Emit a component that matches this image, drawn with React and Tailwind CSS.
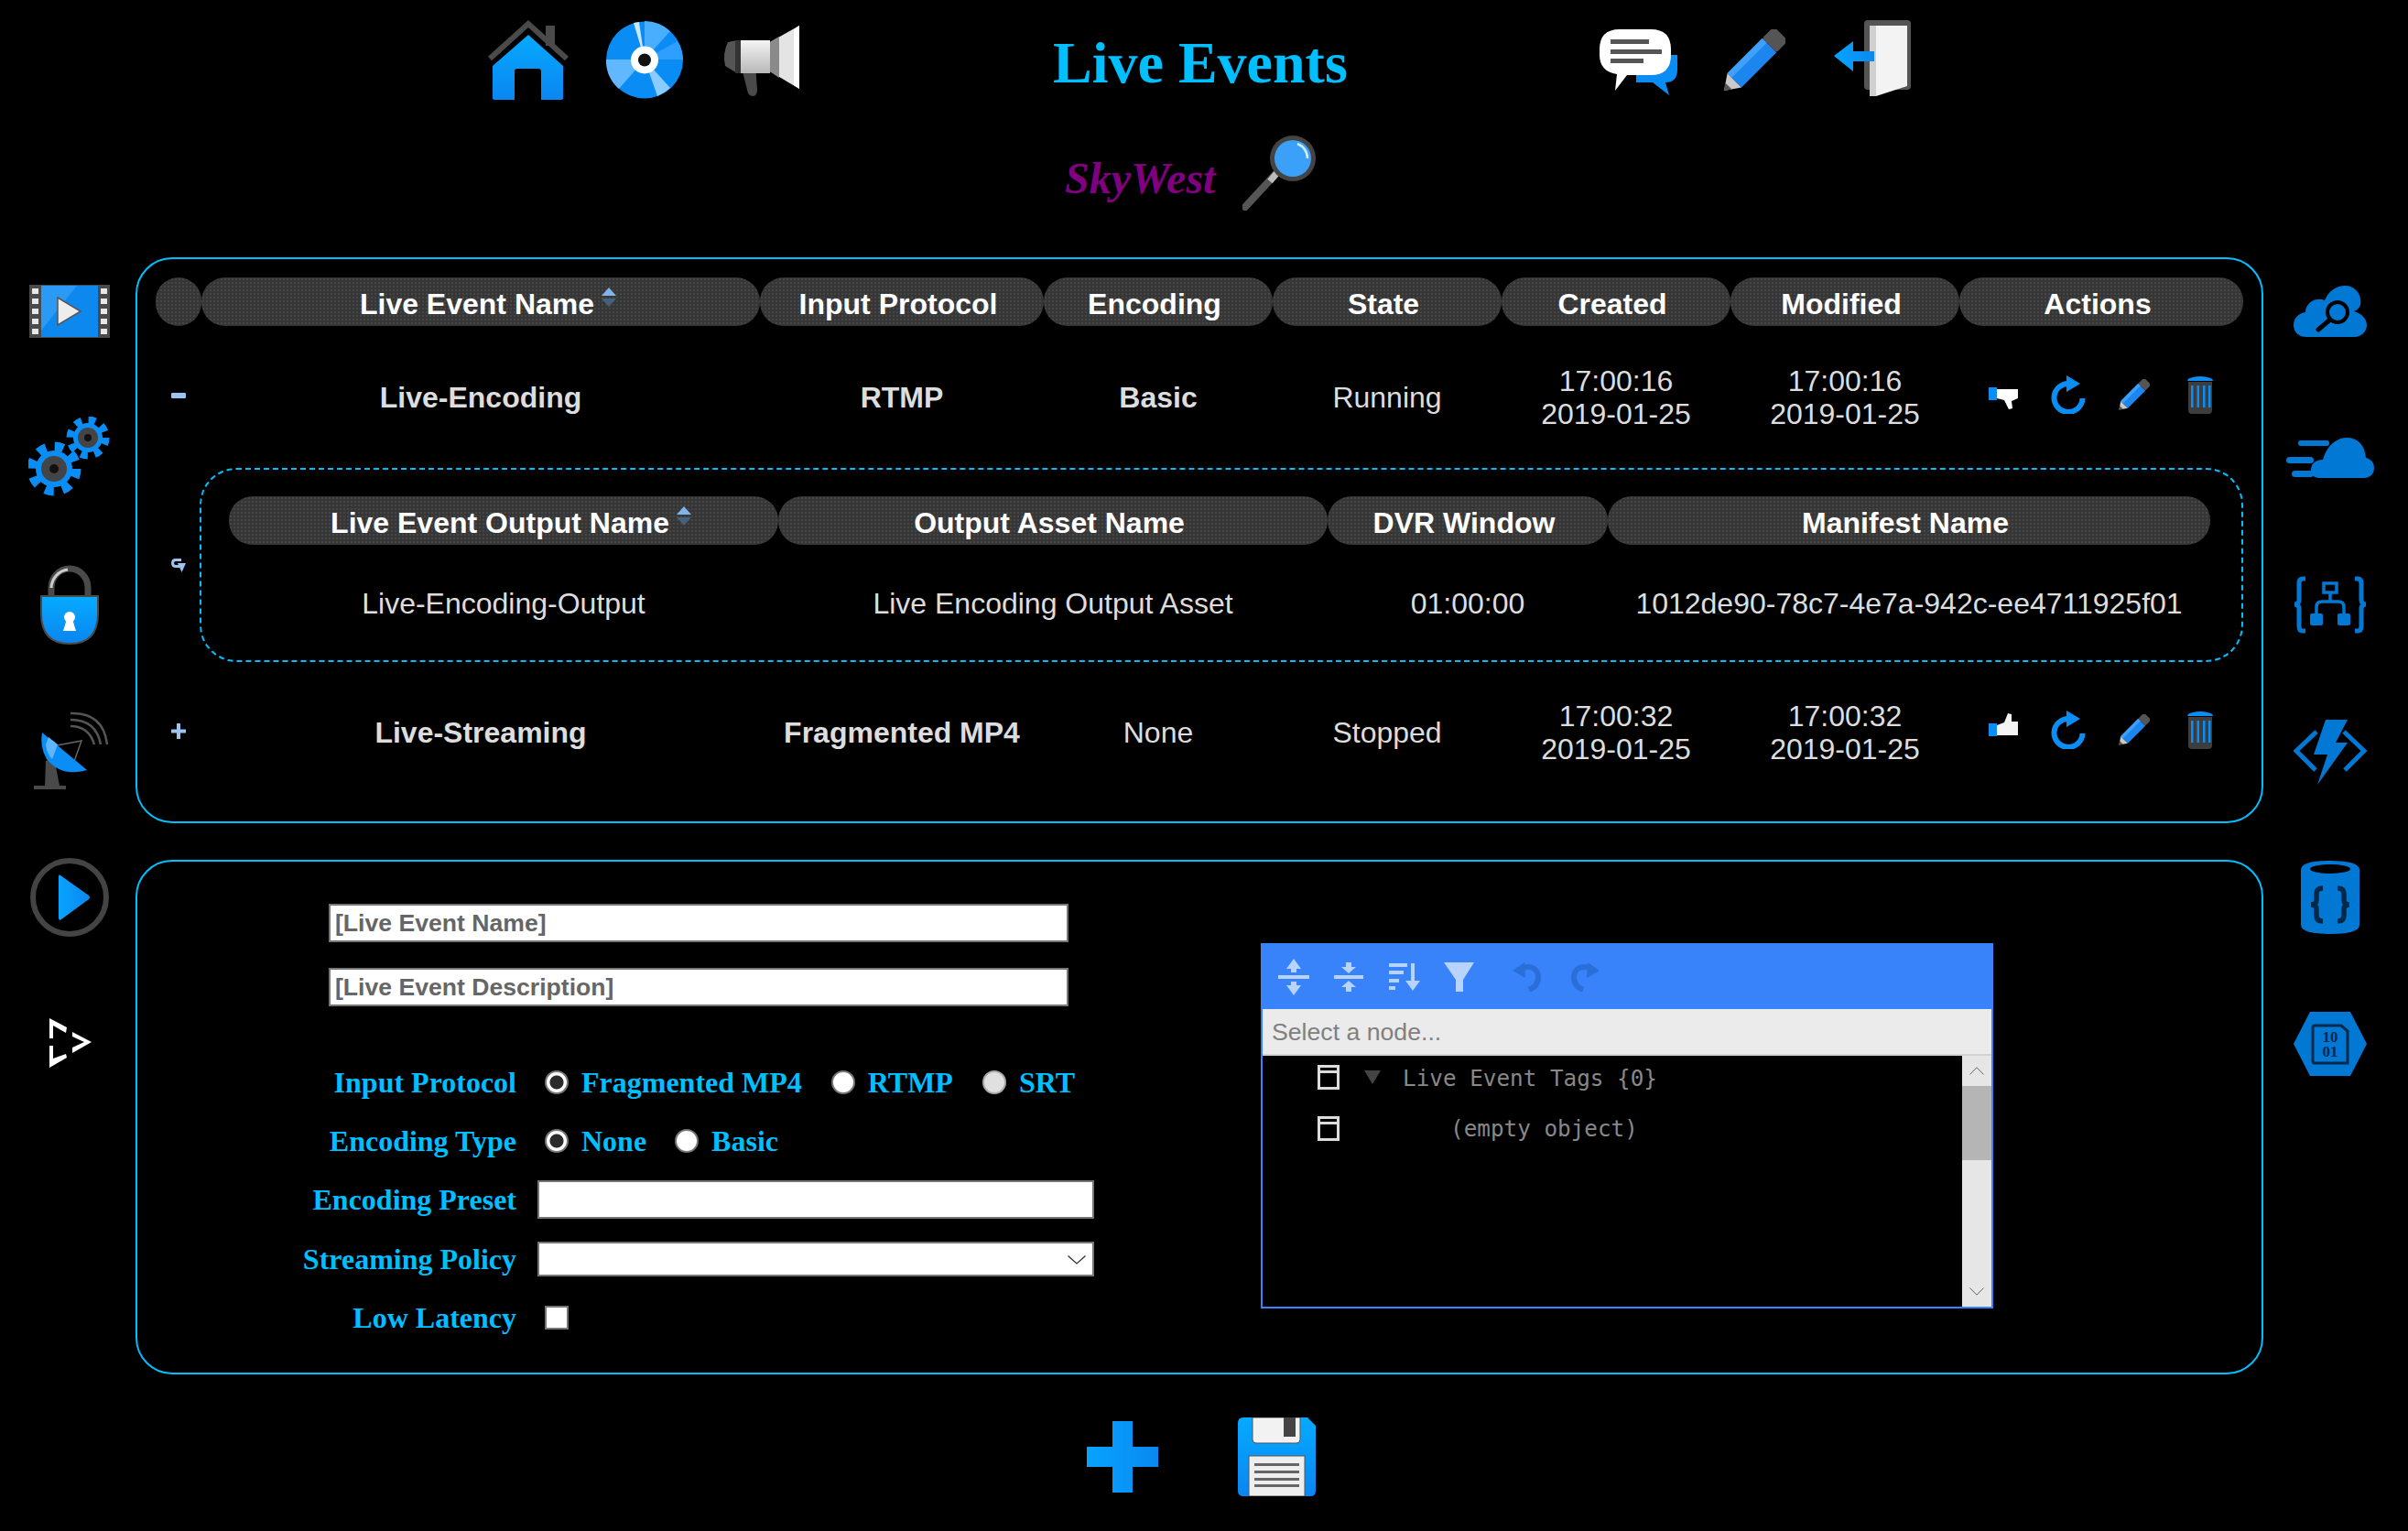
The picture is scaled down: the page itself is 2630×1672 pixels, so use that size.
import React from "react";

const BLUE = "#0a8ef5";
const AZURE = "#0078d4";

const cellHead =
  "relative flex items-center justify-center h-[53px] rounded-[26px] pt-[4px] pr-[8px] bg-[#3a3a3a] bg-[radial-gradient(circle,#464646_1px,#363636_1.5px)] bg-[length:4px_4px] text-white font-bold text-[32px]";

// Gradient used by most of the blue nav icons
function Defs() {
  return (
    <svg width="0" height="0" className="absolute">
      <defs>
        <linearGradient id="blueV" x1="0" y1="0" x2="0" y2="1">
          <stop offset="0" stopColor="#06aaff" />
          <stop offset="1" stopColor="#0a86f0" />
        </linearGradient>
        <linearGradient id="blueH" x1="0" y1="0" x2="1" y2="0">
          <stop offset="0" stopColor="#08a4ff" />
          <stop offset="1" stopColor="#0a88f0" />
        </linearGradient>
        <linearGradient id="metal" x1="0" y1="0" x2="0" y2="1">
          <stop offset="0" stopColor="#f4f4f4" />
          <stop offset="1" stopColor="#b8b8b8" />
        </linearGradient>
      </defs>
    </svg>
  );
}

function HomeIcon() {
  return (
    <svg width="90" height="88" viewBox="0 0 90 88" className="mt-[22px]">
      <rect x="64" y="6" width="10" height="22" fill="#4a4a4a" />
      <path d="M3 42 L45 4 L87 42" fill="none" stroke="#4a4a4a" strokeWidth="6" />
      <path d="M45 16 L83 50 V85 Q83 87 80 87 H59 V56 Q59 53 56 53 H33 Q30 53 30 56 V87 H9 Q6 87 6 85 V50 Z" fill="url(#blueV)" />
    </svg>
  );
}

function DiscIcon() {
  return (
    <svg width="84" height="85" viewBox="0 0 84 85" className="mt-[23px]">
      <circle cx="42" cy="42.5" r="42" fill="#0a8cf5" />
      <path d="M42 42 L42 0 A42 42 0 0 1 70 11 Z" fill="#4aaeff" />
      <path d="M42 42 L0 42 A42 42 0 0 0 14 74 Z" fill="#62b8ff" />
      <path d="M42 42 L56 82 A42 42 0 0 0 70 73 Z" fill="#8accff" />
      <path d="M42 42 L84 42 A42 42 0 0 0 78 22 Z" fill="#2f9fff" />
      <path d="M42 42 L30 2 L36 1 Z" fill="#cbe6ff" />
      <circle cx="42" cy="42.5" r="15" fill="#fff" />
      <circle cx="42" cy="42.5" r="7" fill="#111" />
    </svg>
  );
}

function MegaphoneIcon() {
  return (
    <svg width="84" height="77" viewBox="0 0 84 77" className="mt-[28px]">
      <path d="M20 42 H36 L38 70 Q38 77 33 77 Q28 77 27 70 Z" fill="#4a4a4a" />
      <path d="M6 18 Q0 30 3 44 L16 52 V16 Z" fill="#555" />
      <rect x="14" y="16" width="38" height="36" fill="url(#metal)" />
      <rect x="14" y="16" width="6" height="36" fill="#333" />
      <path d="M52 18 L84 0 V69 L52 50 Z" fill="#e4e4e4" />
      <path d="M78 4 L84 0 V69 L78 65 Z" fill="#fff" />
      <path d="M52 18 L62 12 V57 L52 50 Z" fill="#8a8a8a" />
    </svg>
  );
}

function ChatIcon() {
  return (
    <svg width="85" height="75" viewBox="0 0 85 75" className="mt-[30px]">
      <path d="M40 30 H85 V46 Q85 60 72 60 L76 74 L58 60 H40 Z" fill="#0a8cf5" />
      <path d="M22 2 H56 Q78 2 78 24 V30 Q78 52 56 52 H30 L17 69 L19 51 Q0 48 0 30 V24 Q0 2 22 2 Z" fill="#fff" />
      <rect x="12" y="13" width="42" height="5" fill="#555" />
      <rect x="12" y="24" width="56" height="5" fill="#555" />
      <rect x="12" y="34" width="36" height="5" fill="#555" />
    </svg>
  );
}

function PencilIcon({ size = 68, className = "" }) {
  return (
    <svg width={size} height={size} viewBox="0 0 68 68" className={className}>
      <g transform="translate(1 67) rotate(-45)">
        <path d="M0 0 L16 -11 V11 Z" fill="#c9c9c9" />
        <path d="M0 0 L7 -5 V5 Z" fill="#555" />
        <rect x="16" y="-11" width="54" height="22" fill="#1c86ee" />
        <rect x="16" y="-11" width="54" height="7" fill="#3ea0f7" />
        <rect x="70" y="-11" width="18" height="22" rx="3" fill="#555" />
      </g>
    </svg>
  );
}

function DoorIcon() {
  return (
    <svg width="84" height="83" viewBox="0 0 84 83" className="mt-[22px]">
      <rect x="33" y="0" width="51" height="76" rx="4" fill="#555" />
      <path d="M39 6 H80 V72 L46 83 H39 Z" fill="#f3f3f3" />
      <path d="M39 6 H46 V83 H39 Z" fill="#d0d0d0" />
      <path d="M0 39 L21 23 V34 H44 V45 H21 V56 Z" fill="url(#blueH)" />
    </svg>
  );
}

function SearchIcon() {
  return (
    <svg width="81" height="82" viewBox="0 0 81 82">
      <path d="M40 38 L3 78" stroke="#555" strokeWidth="8" strokeLinecap="round" />
      <path d="M40 38 L30 50" stroke="#bbb" strokeWidth="7" />
      <circle cx="55" cy="25" r="25" fill="#444" />
      <circle cx="55" cy="25" r="20" fill="#3ba0f8" />
      <path d="M60 9 A17 17 0 0 1 71 25" fill="none" stroke="#d4ecff" strokeWidth="2.5" />
    </svg>
  );
}

function FilmIcon() {
  return (
    <svg width="88" height="58" viewBox="0 0 88 58">
      <rect width="88" height="58" fill="#4a4a4a" />
      <rect x="13" y="1" width="62" height="56" fill="#0c88ee" />
      <path d="M13 1 H52 L13 50 Z" fill="#2b9af5" />
      {[4, 15, 26, 37, 48].map((y) => (
        <g key={y} fill="#e8e8e8">
          <rect x="3" y={y} width="7" height="6" />
          <rect x="78" y={y} width="7" height="6" />
        </g>
      ))}
      <path d="M31 14 L56 29 L31 44 Z" fill="#ededed" stroke="#555" strokeWidth="1.5" />
    </svg>
  );
}

function GearsIcon() {
  return (
    <svg width="89" height="90" viewBox="0 0 89 90">
      <circle cx="28" cy="57" r="24" fill="none" stroke={BLUE} strokeWidth="11" strokeDasharray="9.5 9.35" />
      <circle cx="28" cy="57" r="20" fill={BLUE} />
      <circle cx="28" cy="57" r="14" fill="#444" />
      <circle cx="28" cy="57" r="5" fill="#111" />
      <circle cx="65" cy="23" r="19" fill="none" stroke={BLUE} strokeWidth="9" strokeDasharray="7.5 7.43" />
      <circle cx="65" cy="23" r="16" fill={BLUE} />
      <circle cx="65" cy="23" r="11" fill="#444" />
      <circle cx="65" cy="23" r="4" fill="#111" />
    </svg>
  );
}

function LockIcon() {
  return (
    <svg width="64" height="88" viewBox="0 0 64 88">
      <path d="M12 40 V26 A20 21 0 0 1 52 26 V40" fill="none" stroke="#4a4a4a" strokeWidth="7" />
      <path d="M12 26 A20 21 0 0 1 30 6" fill="none" stroke="#ccc" strokeWidth="3" />
      <path d="M0 34 H64 V54 Q64 88 32 88 Q0 88 0 54 Z" fill="#4a4a4a" />
      <path d="M2 36 H62 V54 Q62 86 32 86 Q2 86 2 54 Z" fill="url(#blueV)" />
      <circle cx="32" cy="58" r="6" fill="#fff" />
      <path d="M29 60 L25 73 H39 L35 60 Z" fill="#fff" />
    </svg>
  );
}

function DishIcon() {
  return (
    <svg width="81" height="86" viewBox="0 0 81 86" className="ml-[4px]">
      <path d="M0 85 H35 V81 H28 L22 50 L13 54 L12 81 H0 Z" fill="#4a4a4a" />
      <path d="M20 38 L52 32 L42 60" fill="none" stroke="#666" strokeWidth="1.5" />
      <path d="M9 23 L58 64 Q30 72 14 52 Q6 38 9 23 Z" fill={BLUE} />
      <path d="M13 36 Q14 46 20 52 L26 36 L16 28 Z" fill="#5fb6ff" />
      <path d="M40 2 Q76 1 80 36 M40 9 Q68 9 73 36 M40 16 Q60 16 66 36" fill="none" stroke="#555" strokeWidth="2.5" />
    </svg>
  );
}

function PlayIcon() {
  return (
    <svg width="86" height="86" viewBox="0 0 86 86">
      <circle cx="43" cy="43" r="40" fill="none" stroke="#444" strokeWidth="6" />
      <path d="M33 19 Q31 17 31 21 V65 Q31 69 34 67 L64 45 Q66 43 64 41 Z" fill="url(#blueH)" />
    </svg>
  );
}

function BuildIcon() {
  return (
    <svg width="48" height="56" viewBox="0 0 48 56" fill="#fff">
      <path d="M2 0 L21 10 L20 16 L6 8 V22 H2 Z" />
      <path d="M2 54 L21 43 L20 39 L6 44 V30 H2 Z" />
      <path d="M27 15 L48 26 L27 38 V32 L40 26 L27 20 Z" />
    </svg>
  );
}

function CloudSearchIcon() {
  return (
    <svg width="80" height="56" viewBox="0 0 80 56">
      <path d="M14 56 C5 56 0 50 0 43 C0 35 6 30 13 29 C13 19 24 12 34 16 C38 6 47 0 56 0 C67 0 75 9 73 21 C71 26 68 27 66 28 C74 30 80 36 80 43 C80 50 74 56 66 56 Z" fill={AZURE} />
      <circle cx="48" cy="29" r="11" fill="none" stroke="#000" strokeWidth="4" />
      <path d="M40 37 L27 48" stroke="#000" strokeWidth="5" strokeLinecap="round" />
    </svg>
  );
}

function CloudFastIcon() {
  return (
    <svg width="96" height="44" viewBox="0 0 96 44" fill={AZURE}>
      <path d="M36 44 C30 44 27 40 27 35 C27 28 33 24 40 24 C44 9 55 0 66 0 C78 0 86 8 87 22 C92 23 96 27 96 33 C96 40 91 44 85 44 Z" />
      <rect x="13" y="3" width="34" height="6" rx="3" />
      <rect x="0" y="21" width="30" height="7" rx="3.5" />
      <rect x="6" y="36" width="24" height="7" rx="3.5" />
    </svg>
  );
}

function LogicIcon() {
  return (
    <svg width="80" height="63" viewBox="0 0 80 63">
      <g fill="none" stroke={AZURE} strokeWidth="5">
        <path d="M13 3 H10 Q6 3 6 8 V26 Q6 31 1 31 Q6 31 6 36 V55 Q6 60 10 60 H13" />
        <path d="M67 3 H70 Q74 3 74 8 V26 Q74 31 79 31 Q74 31 74 36 V55 Q74 60 70 60 H67" />
        <rect x="33" y="8" width="14" height="10" strokeWidth="3.5" />
        <path d="M40 18 V28 M25 41 V34 Q25 28 31 28 H49 Q55 28 55 34 V41" strokeWidth="3.5" />
      </g>
      <rect x="18" y="41" width="14" height="13" rx="2" fill={AZURE} />
      <rect x="48" y="41" width="14" height="13" rx="2" fill={AZURE} />
    </svg>
  );
}

function FunctionIcon() {
  return (
    <svg width="80" height="73" viewBox="0 0 80 73">
      <path d="M25 15 L3 36 L24 57 M55 15 L77 36 L56 57" fill="none" stroke={AZURE} strokeWidth="5" />
      <path d="M35 2 H59 L46 27 H59 L26 73 L37 40 H22 Z" fill={AZURE} />
    </svg>
  );
}

function CosmosIcon() {
  return (
    <svg width="64" height="80" viewBox="0 0 64 80">
      <path d="M0 10 Q0 0 32 0 Q64 0 64 10 V70 Q64 80 32 80 Q0 80 0 70 Z" fill={AZURE} />
      <ellipse cx="32" cy="9" rx="22" ry="5" fill="#000" />
      <path d="M24 30 Q17 30 17 36 V43 Q17 48 11 48 Q17 48 17 53 V60 Q17 66 24 66 M40 30 Q47 30 47 36 V43 Q47 48 53 48 Q47 48 47 53 V60 Q47 66 40 66" fill="none" stroke="#02284a" strokeWidth="5.5" />
    </svg>
  );
}

function HexIcon() {
  return (
    <svg width="80" height="70" viewBox="0 0 80 70">
      <path d="M0 35 L18 0 H62 L80 35 L62 70 H18 Z" fill={AZURE} />
      <path d="M23 15 H52 L59 21 V56 H23 Q21 56 21 54 V17 Q21 15 23 15 Z" fill="none" stroke="#02284a" strokeWidth="3" />
      <text x="40" y="33" textAnchor="middle" fontSize="17" fontFamily="Liberation Serif, serif" fontWeight="bold" fill="#02284a">10</text>
      <text x="40" y="49" textAnchor="middle" fontSize="17" fontFamily="Liberation Serif, serif" fontWeight="bold" fill="#02284a">01</text>
    </svg>
  );
}

function ThumbDown() {
  return (
    <svg width="32" height="25" viewBox="0 0 32 25" className="mt-[6px]">
      <rect x="0" y="1" width="9" height="14" fill={BLUE} />
      <path d="M9 3 H32 V13 L25 16 L26 24 L22 25 L17 15 L9 13 Z" fill="#fff" />
    </svg>
  );
}

function ThumbUp() {
  return (
    <svg width="32" height="26" viewBox="0 0 32 26" className="mb-[10px]">
      <rect x="0" y="11" width="9" height="14" fill={BLUE} />
      <path d="M9 13 L17 10 L21 0 L25 1 L25 9 H32 V24 H9 Z" fill="#f4f4f4" />
    </svg>
  );
}

function RefreshIcon() {
  return (
    <svg width="38" height="42" viewBox="0 0 38 42">
      <path d="M20 9 A15.5 15.5 0 1 0 34.5 25" fill="none" stroke={BLUE} strokeWidth="6" />
      <path d="M17 0 L32 9 L17 18 Z" fill={BLUE} />
    </svg>
  );
}

function TrashIcon() {
  return (
    <svg width="28" height="41" viewBox="0 0 28 41">
      <path d="M1 6 H27 V37 Q27 41 23 41 H5 Q1 41 1 37 Z" fill="#3d3d3d" />
      <path d="M0 5 Q0 2 6 1 Q14 -1 22 1 Q28 2 28 5 Z" fill={BLUE} />
      {[4, 10.5, 17, 23].map((x) => (
        <rect key={x} x={x} y="10" width="2.5" height="24" fill={BLUE} />
      ))}
    </svg>
  );
}

// jsoneditor toolbar glyphs
function ExpandIcon() {
  return (
    <svg width="34" height="40" viewBox="0 0 34 40" fill="#b8d3fd">
      <rect x="0" y="18" width="34" height="4" />
      <path d="M17 0 L25 11 H20 V15 H14 V11 H9 Z" />
      <path d="M17 40 L25 29 H20 V25 H14 V29 H9 Z" />
    </svg>
  );
}

function CollapseIcon() {
  return (
    <svg width="32" height="32" viewBox="0 0 32 32" fill="#b8d3fd">
      <rect x="0" y="14" width="32" height="4" />
      <path d="M16 12 L24 5 H19 V0 H13 V5 H8 Z" />
      <path d="M16 20 L24 27 H19 V32 H13 V27 H8 Z" />
    </svg>
  );
}

function SortIcon() {
  return (
    <svg width="34" height="30" viewBox="0 0 34 30" fill="#b8d3fd">
      <rect x="0" y="0" width="20" height="4" />
      <rect x="0" y="8" width="16" height="4" />
      <rect x="0" y="17" width="11" height="4" />
      <rect x="0" y="25" width="7" height="4" />
      <path d="M24 0 H28 V19 H34 L26 30 L18 19 H24 Z" />
    </svg>
  );
}

function FilterIcon() {
  return (
    <svg width="33" height="32" viewBox="0 0 33 32" fill="#b8d3fd">
      <path d="M0 0 H33 L21 19 V32 H13 V19 Z" />
    </svg>
  );
}

function UndoIcon({ flip }) {
  return (
    <svg width="36" height="32" viewBox="0 0 36 32" className={flip ? "-scale-x-100" : ""}>
      <path d="M12 6 Q29 2 30 16 Q30 26 20 30" fill="none" stroke="#2a6ed8" strokeWidth="6" />
      <path d="M2 9 L15 0 L16 17 Z" fill="#2a6ed8" />
    </svg>
  );
}

function NodeBox() {
  return (
    <span className="flex flex-col w-[24px] h-[27px] border-[3px] border-[#dcdcdc] shrink-0">
      <span className="h-[6px] border-b-[3px] border-[#dcdcdc]" />
    </span>
  );
}

function Chevron({ up, color = "#666" }) {
  return (
    <svg width="16" height="9" viewBox="0 0 16 9">
      <path d={up ? "M0.5 8.5 L8 0.8 L15.5 8.5" : "M0.5 0.5 L8 8.2 L15.5 0.5"} fill="none" stroke={color} strokeWidth="1" />
    </svg>
  );
}

function SortMark() {
  return (
    <svg width="16" height="21" viewBox="0 0 16 21" className="absolute left-full top-[6px] ml-[8px]">
      <path d="M8 0 L16 9 H0 Z" fill="#7fb5ea" />
      <path d="M8 21 L16 12 H0 Z" fill="#46607c" />
    </svg>
  );
}

function Actions({ running }) {
  return (
    <div className="flex items-center pl-[32px] pb-[5px]">
      {running ? <ThumbDown /> : <ThumbUp />}
      <span className="flex ml-[36px]">
        <RefreshIcon />
      </span>
      <PencilIcon size={34} className="ml-[36px]" />
      <span className="flex ml-[41px]">
        <TrashIcon />
      </span>
    </div>
  );
}

function EventRow({ toggle, name, protocol, protocolBold, encoding, encodingBold, state, time, running, height }) {
  return (
    <div className={`grid grid-cols-[50px_610px_310px_250px_250px_250px_250px_310px] items-center text-[#dddddd] text-[32px] ${height}`}>
      <div className="flex justify-center pb-[3px]">{toggle}</div>
      <div className="text-center font-bold">{name}</div>
      <div className={protocolBold ? "text-center font-bold" : "text-center"}>{protocol}</div>
      <div className={encodingBold ? "text-center font-bold" : "text-center"}>{encoding}</div>
      <div className="text-center">{state}</div>
      <div className="text-center leading-[36px]">
        {time}
        <br />
        2019-01-25
      </div>
      <div className="text-center leading-[36px]">
        {time}
        <br />
        2019-01-25
      </div>
      <Actions running={running} />
    </div>
  );
}

function FormRow({ label, className = "h-[64px]", children }) {
  return (
    <div className={`flex items-center ${className}`}>
      <label className="w-[414px] text-right font-bold text-[32px] text-[#00bfff]">{label}</label>
      <div className="ml-[23px] flex items-center">{children}</div>
    </div>
  );
}

function Radio({ name, checked, disabled, text, className = "" }) {
  return (
    <>
      <input
        type="radio"
        name={name}
        defaultChecked={checked}
        disabled={disabled}
        className={`appearance-none w-[26px] h-[26px] rounded-full border-2 border-[#777] bg-white checked:bg-[radial-gradient(circle,#2b2b2b_7px,#fff_8px)] disabled:bg-[#e0e0e0] disabled:border-[#aaa] ${className}`}
      />
      <span className="ml-[14px] font-bold text-[32px] text-[#00bfff]">{text}</span>
    </>
  );
}

export default function App() {
  return (
    <div className="relative w-[2630px] h-[1672px] bg-black overflow-hidden font-['Liberation_Sans',Arial,sans-serif]">
      <Defs />

      {/* Top nav */}
      <div className="flex items-start h-[148px] pl-[532px]">
        <HomeIcon />
        <span className="flex ml-[40px]"><DiscIcon /></span>
        <span className="flex ml-[43px]"><MegaphoneIcon /></span>
        <h1 className="ml-[277px] mt-[32px] font-['Liberation_Serif',serif] font-bold text-[64px] leading-[74px] text-[#00bfff]">Live Events</h1>
        <span className="flex ml-[275px]"><ChatIcon /></span>
        <span className="flex ml-[50px]"><PencilIcon className="mt-[32px]" /></span>
        <span className="flex ml-[53px]"><DoorIcon /></span>
      </div>

      {/* Account */}
      <div className="flex items-start h-[112px] pl-[1163px]">
        <span className="mt-[19px] font-['Liberation_Serif',serif] font-bold italic text-[48px] leading-[55px] text-[#800080]">SkyWest</span>
        <span className="flex ml-[30px]"><SearchIcon /></span>
      </div>

      <div className="flex">
        {/* Left rail */}
        <div className="flex flex-col w-[148px]">
          {[<FilmIcon key="a" />, <GearsIcon key="b" />, <LockIcon key="c" />, <DishIcon key="d" />, <PlayIcon key="e" />, <BuildIcon key="f" />].map((icon, i) => (
            <div key={i} className="flex items-center justify-center h-[160px] pl-[3px]">
              {icon}
            </div>
          ))}
        </div>

        {/* Panels */}
        <div className="flex flex-col w-[2324px] pt-[21px]">
          <section className="h-[618px] rounded-[40px] border-2 border-[#00bfff] pt-[20px] pl-[20px]">
            <div className="grid grid-cols-[50px_610px_310px_250px_250px_250px_250px_310px]">
              <div className={cellHead} />
              <div className={cellHead}>
                <span className="relative">Live Event Name<SortMark /></span>
              </div>
              <div className={cellHead}>Input Protocol</div>
              <div className={cellHead}>Encoding</div>
              <div className={cellHead}>State</div>
              <div className={cellHead}>Created</div>
              <div className={cellHead}>Modified</div>
              <div className={cellHead}>Actions</div>
            </div>

            <EventRow
              height="h-[155px]"
              running
              toggle={
                <svg width="16" height="6" viewBox="0 0 16 6"><rect width="16" height="6" rx="1" fill="#9cc4ee" /></svg>
              }
              name="Live-Encoding"
              protocol="RTMP"
              protocolBold
              encoding="Basic"
              encodingBold
              state="Running"
              time="17:00:16"
            />

            {/* Outputs of the expanded event */}
            <div className="flex items-center h-[212px]">
              <div className="flex justify-center w-[48px] pl-[2px]">
                <svg width="16" height="16" viewBox="0 0 16 16">
                  <path d="M11 2.5 H5 Q1.5 2.5 1.5 6 Q1.5 9.5 5 9.5 H11" fill="none" stroke="#9cc4ee" strokeWidth="3" />
                  <path d="M7 6 H16 L11.5 16 Z" fill="#9cc4ee" />
                </svg>
              </div>
              <div className="w-[2232px] h-[212px] rounded-[40px] border-2 border-dashed border-[#00bfff] pt-[29px] pl-[30px]">
                <div className="grid grid-cols-[600px_600px_306px_658px]">
                  <div className={cellHead}>
                    <span className="relative">Live Event Output Name<SortMark /></span>
                  </div>
                  <div className={cellHead}>Output Asset Name</div>
                  <div className={cellHead}>DVR Window</div>
                  <div className={cellHead}>Manifest Name</div>
                </div>
                <div className="grid grid-cols-[600px_600px_306px_658px] items-center h-[127px] text-[#dddddd] text-[32px] text-center">
                  <div>Live-Encoding-Output</div>
                  <div>Live Encoding Output Asset</div>
                  <div>01:00:00</div>
                  <div>1012de90-78c7-4e7a-942c-ee4711925f01</div>
                </div>
              </div>
            </div>

            <EventRow
              height="h-[153px]"
              toggle={
                <svg width="16" height="17" viewBox="0 0 16 17">
                  <path d="M6 0 H10 V6.5 H16 V10.5 H10 V17 H6 V10.5 H0 V6.5 H6 Z" fill="#9cc4ee" />
                </svg>
              }
              name="Live-Streaming"
              protocol="Fragmented MP4"
              protocolBold
              encoding="None"
              state="Stopped"
              time="17:00:32"
            />
          </section>

          <section className="flex mt-[40px] h-[562px] rounded-[40px] border-2 border-[#00bfff]">
            <div className="w-[1227px] pt-[46px] font-['Liberation_Serif',serif]">
              <div className="flex flex-col gap-[28px] pl-[209px] font-['Liberation_Sans',sans-serif]">
                <input
                  placeholder="[Live Event Name]"
                  className="w-[808px] h-[42px] border-2 border-[#767676] bg-white px-[5px] font-bold text-[26.6px] placeholder:text-[#666]"
                />
                <input
                  placeholder="[Live Event Description]"
                  className="w-[808px] h-[42px] border-2 border-[#767676] bg-white px-[5px] font-bold text-[26.6px] placeholder:text-[#666]"
                />
              </div>

              <div className="mt-[51px]">
                <FormRow label="Input Protocol">
                  <Radio name="protocol" checked text="Fragmented MP4" className="ml-[8px]" />
                  <Radio name="protocol" text="RTMP" className="ml-[32px]" />
                  <Radio name="protocol" disabled text="SRT" className="ml-[32px]" />
                </FormRow>
                <FormRow label="Encoding Type">
                  <Radio name="encoding" checked text="None" className="ml-[8px]" />
                  <Radio name="encoding" text="Basic" className="ml-[31px]" />
                </FormRow>
                <FormRow label="Encoding Preset">
                  <input className="w-[608px] h-[42px] border-2 border-[#767676] bg-white" />
                </FormRow>
                <FormRow label="Streaming Policy" className="h-[65px]">
                  <div className="relative">
                    <select className="block appearance-none w-[608px] h-[38px] border-2 border-[#767676] bg-white" />
                    <span className="absolute right-[9px] top-[15px] flex">
                      <svg width="20" height="10" viewBox="0 0 20 10">
                        <path d="M0.5 0.5 L10 9 L19.5 0.5" fill="none" stroke="#333" strokeWidth="1.3" />
                      </svg>
                    </span>
                  </div>
                </FormRow>
                <FormRow label="Low Latency">
                  <input type="checkbox" className="appearance-none ml-[8px] w-[26px] h-[26px] border-2 border-[#767676] bg-white" />
                </FormRow>
              </div>
            </div>

            {/* JSON tags editor */}
            <div className="flex flex-col w-[800px] h-[399px] mt-[89px] border-2 border-[#3883fa]">
              <div className="flex items-center h-[70px] bg-[#3883fa] pl-[17px]">
                <ExpandIcon />
                <span className="flex ml-[27px]"><CollapseIcon /></span>
                <span className="flex ml-[28px]"><SortIcon /></span>
                <span className="flex ml-[26px]"><FilterIcon /></span>
                <span className="flex ml-[40px]"><UndoIcon /></span>
                <span className="flex ml-[27px]"><UndoIcon flip /></span>
              </div>
              <div className="flex items-center h-[51px] bg-[#ebebeb] border-b-2 border-[#d3d3d3] px-[10px] text-[26.67px] text-[#808080]">
                Select a node...
              </div>
              <div className="flex flex-1 bg-black min-h-0">
                <div className="flex-1 pt-[10px] font-['DejaVu_Sans_Mono',monospace] text-[24.3px] text-[#888]">
                  <div className="flex items-center h-[27px] pl-[60px]">
                    <NodeBox />
                    <span className="ml-[27px] w-0 h-0 border-x-[9px] border-t-[15px] border-x-transparent border-t-[#444]" />
                    <span className="ml-[24px] pt-[4px]">Live Event Tags {"{0}"}</span>
                  </div>
                  <div className="flex items-center h-[27px] mt-[29px] pl-[60px]">
                    <NodeBox />
                    <span className="ml-[121px] pt-[2px]">(empty object)</span>
                  </div>
                </div>
                <div className="flex flex-col items-center w-[32px] bg-[#e6e6e6]">
                  <div className="flex items-center justify-center h-[33px]"><Chevron up /></div>
                  <div className="w-full h-[81px] bg-[#b5b5b5]" />
                  <div className="flex flex-1 items-end justify-center pb-[12px]"><Chevron /></div>
                </div>
              </div>
            </div>
          </section>

          {/* Add / save */}
          <div className="flex items-start pl-[1039px] mt-[47px]">
            <svg width="78" height="78" viewBox="0 0 78 78" className="mt-[4px]">
              <path d="M28 0 H50 V28 H78 V50 H50 V78 H28 V50 H0 V28 H28 Z" fill="url(#blueH)" />
            </svg>
            <svg width="85" height="86" viewBox="0 0 85 86" className="ml-[87px]">
              <path d="M6 0 H76 L85 9 V80 Q85 86 79 86 H6 Q0 86 0 80 V6 Q0 0 6 0 Z" fill="url(#blueV)" />
              <path d="M16 0 H68 V24 Q68 28 64 28 H20 Q16 28 16 24 Z" fill="#f2f2f2" stroke="#555" strokeWidth="1" />
              <rect x="50" y="0" width="13" height="21" fill="#444" />
              <rect x="12" y="42" width="61" height="44" fill="#eeeeee" stroke="#555" strokeWidth="1" />
              {[50, 58, 66, 73].map((y) => (
                <rect key={y} x="18" y={y} width="49" height="3" fill="#666" />
              ))}
            </svg>
          </div>
        </div>

        {/* Right rail */}
        <div className="flex flex-col w-[158px]">
          {[<CloudSearchIcon key="a" />, <CloudFastIcon key="b" />, <LogicIcon key="c" />, <FunctionIcon key="d" />, <CosmosIcon key="e" />, <HexIcon key="f" />].map((icon, i) => (
            <div key={i} className="flex items-center justify-center h-[160px] pr-[13px]">
              {icon}
            </div>
          ))}
        </div>
      </div>
    </div>
  );
}
